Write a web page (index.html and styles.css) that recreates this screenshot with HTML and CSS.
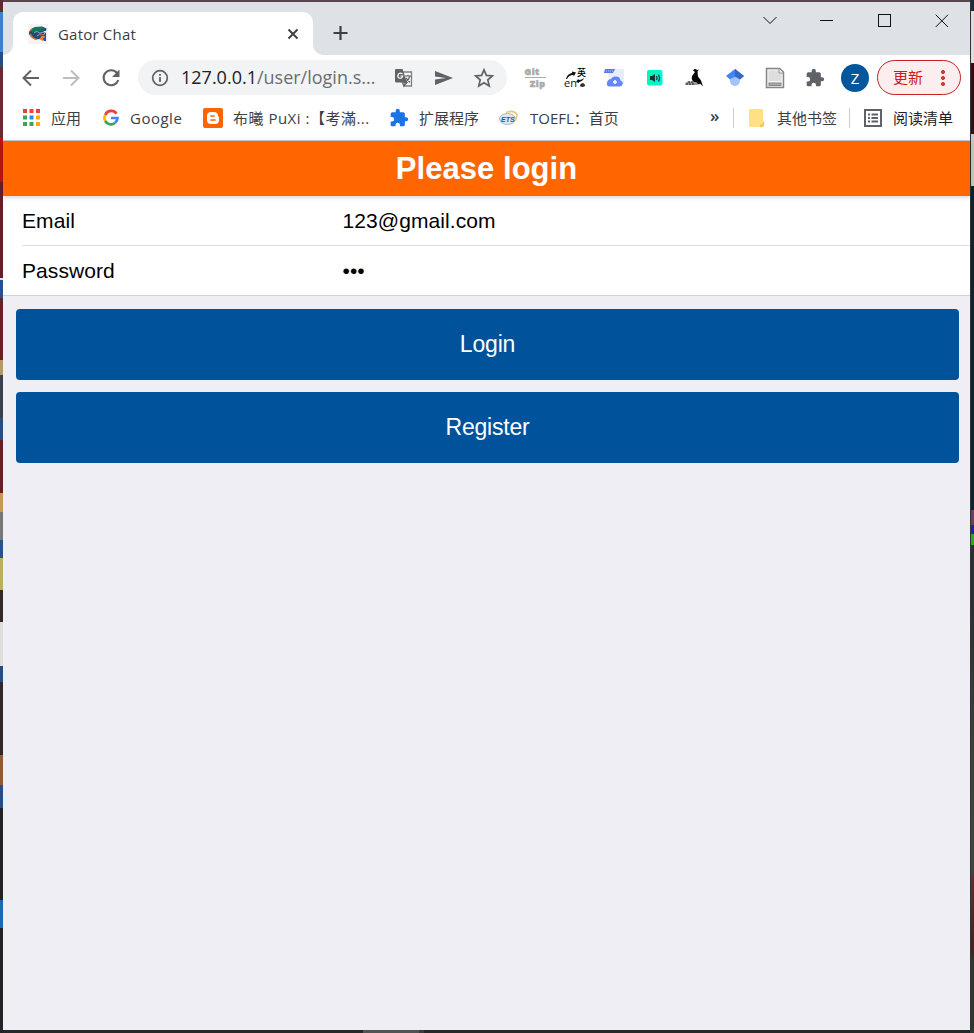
FILE: index.html
```html
<!DOCTYPE html>
<html lang="en">
<head>
<meta charset="utf-8">
<title>Gator Chat</title>
<link rel="stylesheet" href="styles.css">
</head>
<body>
<div class="edge edge-left"></div>
<div class="window">
  <div class="tabstrip">
    <div class="tab">
      <svg class="favicon" width="20" height="20" viewBox="0 0 20 20"><rect width="20" height="20" fill="#f5f4f4"/><path d="M1 8l2-3 4-2 7-.5 4.500 2L18 7l-3 0 3 2v4l-4-1-2 3-5 .5L3 13 1 10z" fill="#1d4f70"/><path d="M4 5l4-2 6 0 3 2-3 2H7L4 9z" fill="#12775a"/><path d="M2 7l2-2M2 10l3 4 4 1.500" stroke="#ed682b" stroke-width="1.300" fill="none"/><path d="M6 8.500l3-1 3 1.500 5-1-1 3-4-1-3 2" stroke="#b6cbd9" stroke-width=".7" fill="none"/><path d="M11 10.500l5-.500-3 2z" fill="#c34242"/><path d="M11 15l4-3 2 1-2 4z" fill="#f57a22"/><path d="M15 15l3-3v5l-2 0" fill="#1c4f9c"/></svg>
      <span class="tab-title">Gator Chat</span>
      <svg width="12" height="12" viewBox="0 0 12 12"><path d="M1.500 1.500l9 9m0-9l-9 9" stroke="#3c4043" stroke-width="1.900"/></svg>
    </div>
    <svg class="new-tab" width="16" height="16" viewBox="0 0 16 16"><path d="M7.500 1v14M.5 8h14" stroke="#3c4043" stroke-width="2.200"/></svg>
    <div class="window-controls">
      <svg width="14" height="14" viewBox="0 0 14 14"><path d="M.5 4L7 10.500 13.500 4"/></svg>
      <svg width="14" height="14" viewBox="0 0 14 14"><path d="M0 7.500h13"/></svg>
      <svg width="14" height="14" viewBox="0 0 14 14"><rect x=".5" y="1.500" width="12" height="12"/></svg>
      <svg width="14" height="14" viewBox="0 0 14 14"><path d="M.7 1.700l12.300 12.300m0-12.300L.7 14"/></svg>
    </div>
  </div>

  <div class="toolbar">
    <span class="cell"><svg width="18" height="18" viewBox="0 0 18 18"><path d="M17 9H2m7-7.500L1.500 9 9 16.500" fill="none" stroke="#5f6368" stroke-width="2"/></svg></span>
    <span class="cell"><svg width="18" height="18" viewBox="0 0 18 18"><path d="M1 9h15M9 1.500L16.500 9 9 16.500" fill="none" stroke="#bbbdbf" stroke-width="2"/></svg></span>
    <span class="cell"><svg width="18" height="18" viewBox="0 0 18 18"><path d="M15 4A7.500 7.500 0 1 0 16.300 11" fill="none" stroke="#5f6368" stroke-width="2.100"/><path d="M17.500.5v7.500H10z" fill="#5f6368"/></svg></span>
    <div class="omnibox">
      <svg width="18" height="18" viewBox="0 0 18 18"><circle cx="9" cy="9" r="7.300" fill="none" stroke="#5f6368" stroke-width="1.700"/><path d="M9 8v5M9 5v1.800" stroke="#5f6368" stroke-width="1.800"/></svg>
      <span class="url">127.0.0.1<span class="path">/user/login.s...</span></span>
      <span class="cell"><svg width="20" height="20" viewBox="0 0 20 20"><path d="M6 4h11.500v14H10L8 14" fill="#f7f8f9" stroke="#7c8084" stroke-width="1.300"/><path d="M1.500 1h7l4.500 13.500H2.500Q1 14.500 1 13V2z" fill="#5f6368"/><path d="M8.500 6Q6.500 4.300 4.700 5.800 3 8 4.700 9.800 7.500 11.300 8.700 8H6.500" fill="none" stroke="#fff" stroke-width="1.200"/><path d="M11 8h6M14 6.700V8m2 0q-1 4-4.500 6M12 10l4 4.500M10 14.500h3L10 18z" fill="none" stroke="#5f6368" stroke-width="1.200"/></svg></span>
      <span class="cell"><svg width="18" height="16" viewBox="0 0 18 16"><path d="M0 1l18 7L0 15V9.500L11 8 0 6.500z" fill="#5f6368"/></svg></span>
      <span class="cell"><svg width="20" height="20" viewBox="0 0 20 20"><path d="M10 1.800l2.400 5.600 6 .5-4.600 4 1.400 6L10 14.700l-5.200 3.200 1.400-6-4.600-4 6-.5z" fill="none" stroke="#5f6368" stroke-width="1.700"/></svg></span>
    </div>
    <div class="extensions">
      <span class="cell"><span class="gitzip"><span>Git</span><i></i><span class="zip">Zip</span></span></span>
      <span class="cell"><svg width="22" height="22" viewBox="0 0 22 22"><path d="M2 12Q3 7 8 6V4.500l4 1-2 3.500-1-1Q5 8 3 12zM20 11q-1 3-5 4v1l-3-1 2-3 1 1q3 0 5-2z" fill="#111"/><text class="ext-cjk" x="13" y="8.500">英</text><text class="ext-en" x="0" y="20">en</text><path d="M16 18q3-4 5 0v1q-3 2-5 0z" fill="#333"/></svg></span>
      <span class="cell"><svg width="22" height="22" viewBox="0 0 22 22"><path d="M4 2h16v15H5z" fill="#e7edf7"/><path d="M1 2h10L9 6H0z" fill="#5978e7"/><path d="M2 4h7" stroke="#b9c8ff" stroke-dasharray="1 1"/><path d="M6 19.500q-4 0-3-4Q4 12 7 12 8 9 12 9.500q4 0 4.500 4 3 1 2 4-.5 2-3 2z" fill="#6685f6"/><path d="M11 13v4m-2-2h4" stroke="#fff" stroke-width="1.500" fill="none"/></svg></span>
      <span class="cell"><svg width="16" height="16" viewBox="0 0 16 16"><defs><linearGradient id="mint" x2="1"><stop stop-color="#00f8b3"/><stop offset="1" stop-color="#00f4df"/></linearGradient></defs><rect width="15.500" height="15.500" rx="2" fill="url(#mint)"/><path d="M3 6h2l3-2v8L5 10H3z" fill="#13372e"/><path d="M9.500 6q1 2 0 4m2-5.500q2 3.500 0 7" fill="none" stroke="#13372e" stroke-width="1.200"/></svg></span>
      <span class="cell"><svg width="20" height="20" viewBox="0 0 20 20"><path d="M8 2.500Q10 0 12 2l2-.5-1.500 2 .5 5 3 4 2 6-3-3-1 1-6-3Q6 11 7 8l3-4z" fill="#080808"/><path d="M1 14.500q2-2 6-1l5 1 1 2.500H0q0-2 1-2.500" fill="#999"/><path d="M1 16h9m-7-2h6" stroke="#222" stroke-dasharray="2 1"/></svg></span>
      <span class="cell"><svg width="18" height="20" viewBox="0 0 18 20"><circle cx="9" cy="13" r="5" fill="#a3c3fa"/><path d="M9 1l9 7-4 3.500Q9 6.500 4 11.500L0 8z" fill="#4285f4"/><path d="M9 1l9 7-4 3.500L9 8z" fill="#3567c7"/></svg></span>
      <span class="cell"><svg width="20" height="22" viewBox="0 0 20 22"><path d="M1.500 1.500h13L18.500 5v15.500h-17z" fill="#f3f3f3" stroke="#858585" stroke-width="1.500"/><path d="M3.500 3.500h10l3 3V14h-13z" fill="#dedede"/><path d="M14 2v4h4" fill="#eee" stroke="#999"/><rect x="4" y="16" width="12" height="2.500" fill="#aaa" stroke="#888"/></svg></span>
      <span class="cell"><svg width="20" height="20" viewBox="0 0 24 24"><path d="M20.500 11H19V7a2 2 0 0 0-2-2h-4V3.500a2.500 2.500 0 0 0-5 0V5H4a2 2 0 0 0-2 2v3.800h1.500a2.700 2.700 0 0 1 0 5.400H2V20a2 2 0 0 0 2 2h3.800v-1.500a2.700 2.700 0 0 1 5.400 0V22H17a2 2 0 0 0 2-2v-4h1.500a2.500 2.500 0 0 0 0-5z" fill="#5f6368"/></svg></span>
      <span class="cell"><span class="avatar">Z</span></span>
    </div>
    <div class="update"><span>更新</span><i class="dots"></i></div>
  </div>

  <div class="bookmarks">
    <a class="bookmark apps"><svg width="18" height="18" viewBox="0 0 18 18"><path d="M0 0h4v4H0zM6.500 0h4v4h-4zM13 0h4v4h-4z" fill="#ea4335"/><path d="M0 6.500h4v4H0zM0 13h4v4H0zM6.500 13h4v4h-4z" fill="#34a853"/><path d="M6.500 6.500h4v4h-4z" fill="#2789ee"/><path d="M13 6.500h4v4h-4zM13 13h4v4h-4z" fill="#fbac05"/></svg><span>应用</span></a>
    <a class="bookmark google"><svg width="16" height="16" viewBox="0 0 16 16"><path d="M13.500 3.600A6.500 6.500 0 0 0 2.200 5" stroke="#ea4335" stroke-width="2.700" fill="none"/><path d="M2.200 5a6.500 6.500 0 0 0 0 6" stroke="#fbbc05" stroke-width="2.700" fill="none"/><path d="M2.200 11A6.500 6.500 0 0 0 12 13" stroke="#34a853" stroke-width="2.700" fill="none"/><path d="M12 13a6.500 6.500 0 0 0 2.500-5H8" stroke="#4285f4" stroke-width="2.700" fill="none"/></svg><span>Google</span></a>
    <a class="bookmark blogger"><svg width="20" height="20" viewBox="0 0 20 20"><rect width="20" height="20" rx="2" fill="#fb6502"/><path d="M8 4h3q4 0 4 4 0 1 1 1v3q0 4-4 4H8q-4 0-4-4V8q0-4 4-4z" fill="#fff"/><path d="M8 8h3M8 12h4" stroke="#fb6502" stroke-width="1.700" stroke-linecap="round"/></svg><span>布曦 PuXi :【考滿...</span></a>
    <a class="bookmark ext"><svg width="20" height="20" viewBox="0 0 24 24"><path d="M20.500 11H19V7a2 2 0 0 0-2-2h-4V3.500a2.500 2.500 0 0 0-5 0V5H4a2 2 0 0 0-2 2v3.800h1.500a2.700 2.700 0 0 1 0 5.400H2V20a2 2 0 0 0 2 2h3.800v-1.500a2.700 2.700 0 0 1 5.400 0V22H17a2 2 0 0 0 2-2v-4h1.500a2.500 2.500 0 0 0 0-5z" fill="#1a73e8"/></svg><span>扩展程序</span></a>
    <a class="bookmark toefl"><svg width="20" height="16" viewBox="0 0 20 16"><ellipse cx="8.500" cy="9" rx="8" ry="5.500" fill="#dce9f4" stroke="#9dbdd8"/><path d="M7 2.500q8-3 11 2 0 5-4 8" fill="none" stroke="#f1c56c" stroke-width="1.500"/><text class="ets" x="2" y="11.500">ETS</text></svg><span>TOEFL：首页</span></a>
    <span class="more">»</span>
    <a class="bookmark other"><svg width="18" height="18" viewBox="0 0 18 18"><path d="M1 0h12q1 0 1 1v10l1 2v4q-1 1-3 1H1q-1 0-1-1V1q0-1 1-1z" fill="#ffe083"/><path d="M14 12q2 1 1 4t-4 2v-2q0-1 3-1z" fill="#f4c84b"/></svg><span>其他书签</span></a>
    <a class="bookmark reading"><svg width="18" height="18" viewBox="0 0 18 18"><rect x="1" y="1" width="16" height="16" fill="#fff" stroke="#5f6368" stroke-width="2"/><path d="M4 5.500h2m1.500 0H14M4 9h2m1.500 0H14M4 12.500h2m1.500 0H14" stroke="#5f6368" stroke-width="1.800"/></svg><span>阅读清单</span></a>
  </div>

  <main class="page">
    <header class="page-header">Please login</header>
    <form class="fields">
      <div class="row"><label>Email</label><span>123@gmail.com</span></div>
      <div class="row"><label>Password</label><span>•••</span></div>
    </form>
    <div class="actions">
      <button type="button">Login</button>
      <button type="button">Register</button>
    </div>
  </main>
</div>
<div class="edge edge-right"></div>
</body>
</html>
```
FILE: styles.css
```css
* { box-sizing: border-box; }
body { margin: 0; width: 974px; height: 1033px; display: grid; grid-template-columns: 3px 967px 4px; background: linear-gradient(90deg, #252829 363px, #505453 363px 419px, #3a3d3c 419px 424px, #252829 424px); overflow: hidden; font-family: "Open Sans", "Noto Sans CJK SC", sans-serif; color: #3c4043; }
svg { display: block; flex: none; overflow: visible; }
.edge-left { background: linear-gradient(#602a34 0 12px, #427dd0 12px 52px, #284e80 52px 67px, #682b33 67px 138px, #bb1710 138px 182px, #64202a 182px 278px, #d9e1e9 278px 280px, #27528d 280px 298px, #682024 298px 360px, #b69568 360px 375px, #39414c 375px 418px, #294e80 418px 440px, #642024 440px 493px, #c49a59 493px 512px, #777 512px 540px, #27528d 540px 558px, #bcae61 558px 590px, #33292b 590px 622px, #ddd 622px 666px, #284d82 666px 682px, #30282b 682px 755px, #905a37 755px 785px, #284d82 785px 808px, #222326 808px 900px, #1c67b5 900px 928px, #222326 928px); }
.edge-right { border-left: 1px solid #303435; background: linear-gradient(#1a2d36 0 11px, #dededc 11px 63px, #321014 63px 134px, #c6c8c8 134px 186px, #11212c 186px 510px, #713b68 510px 525px, #2420a0 525px 534px, #27aa22 534px 545px, #293034 545px 600px, #39413a 740px, #3f473e 870px, #632d31 880px, #43221f 950px, #303630 960px); }
.window { display: flex; flex-direction: column; height: 1030px; border-top: 2px solid #56454e; background: #fff; }
.tabstrip { height: 53px; background: #dee1e6; display: flex; align-items: flex-start; flex: none; }
.tab { width: 300px; height: 43px; margin: 10px 0 0 10px; background: #fff; border-radius: 10px 10px 0 0; display: flex; align-items: center; padding: 0 14px 0 15px; position: relative; }
.tab::before, .tab::after { content: ""; position: absolute; bottom: 0; width: 10px; height: 10px; }
.tab::before { left: -10px; background: radial-gradient(circle at 0 0, transparent 9.500px, #fff 10px); }
.tab::after { right: -10px; background: radial-gradient(circle at 100% 0, transparent 9.500px, #fff 10px); }
.tab-title { margin-left: 10px; font-size: 15px; letter-spacing: .2px; flex: 1; }
.new-tab { margin: 23px 0 0 20px; }
.window-controls { margin: 11px 21px 0 auto; display: flex; gap: 43px; }
.window-controls svg { fill: none; stroke: #111; stroke-width: 1; }
.window-controls svg:nth-child(3) { margin-left: 1px; }
.toolbar { height: 45px; flex: none; display: flex; align-items: center; padding: 0 9px 0 8px; }
.cell { width: 40px; height: 34px; display: flex; align-items: center; justify-content: center; flex: none; }
.omnibox { margin-left: 7px; width: 369px; height: 35px; border-radius: 18px; background: #f1f3f4; display: flex; align-items: center; padding: 0 3px 0 13px; flex: none; }
.url { flex: 1; margin: -2px 0 0 12px; white-space: nowrap; font-size: 18px; color: #202124; }
.path { color: #6a6e73; }
.extensions { display: flex; margin-left: 8px; }
.gitzip { display: grid; grid-template-rows: 10px 2px 10px; width: 21px; font: 800 9px/10px "Open Sans", sans-serif; letter-spacing: .5px; color: #aaa; -webkit-text-stroke: .5px #aaa; }
.gitzip i { background: #aaa; height: 1px; }
.zip { justify-self: end; }
.ext-cjk { font: 500 9px "Noto Sans CJK SC", sans-serif; }
.ext-en { font: 11px "Open Sans", sans-serif; fill: #111; }
.avatar { width: 28px; height: 28px; border-radius: 50%; background: #01579b; color: #fff; font-size: 15px; line-height: 28px; text-align: center; }
.update { margin-left: 2px; width: 84px; height: 35px; flex: none; border: 1.500px solid #c5221f; border-radius: 18px; background: #fceeee; color: #c5221f; font-size: 15px; display: flex; align-items: center; padding: 0 15px; justify-content: space-between; }
.update span { margin-top: -2px; }
.dots { width: 4px; height: 18px; background: radial-gradient(circle, #d33b2f 1.900px, transparent 2.200px) 0 0 / 4px 6px; }
.bookmarks { height: 41px; flex: none; border-bottom: 1px solid #d0d3d7; display: flex; align-items: center; padding: 0 0 5px 20px; font-size: 15px; }
.bookmark { display: flex; align-items: center; white-space: nowrap; flex: none; }
.bookmark span { line-height: 24px; }
.apps { width: 80px; gap: 10px; }
.google { width: 100px; gap: 11px; }
.google span { letter-spacing: .5px; }
.blogger { width: 186px; gap: 10px; }
.blogger span { letter-spacing: .5px; }
.ext { width: 110px; gap: 10px; }
.toefl { width: 180px; gap: 11px; }
.ets { font: italic bold 7px "Liberation Sans", sans-serif; fill: #205a96; }
.more { font-size: 17px; font-weight: 600; line-height: 20px; margin: -4px 0 0 31px; width: 23px; }
.other { border-left: 1px solid #ccc; width: 116px; height: 20px; padding-left: 15px; gap: 10px; }
.reading { border-left: 1px solid #ccc; height: 20px; padding-left: 14px; gap: 11px; color: #202124; }
.page { flex: 1; background: #efeef4; font-family: "Liberation Sans", Arial, sans-serif; color: #000; }
.page-header { height: 55px; background: #ff6600; color: #fff; text-align: center; font-size: 31px; letter-spacing: .05px; line-height: 55px; font-weight: bold; position: relative; box-shadow: 0 1px 5px rgba(0,0,0,.2); }
.fields { margin: 0; background: #fff; border-bottom: 1px solid #d3d3d7; }
.row { height: 50px; margin-left: 19px; display: grid; grid-template-columns: 320.500px 1fr; align-items: center; font-size: 21px; letter-spacing: .08px; border-bottom: 1px solid #dfdfe2; }
.row:last-child { height: 49px; border-bottom: 0; }
.actions { padding: 13px 11px 0 13px; display: grid; gap: 12px; }
.actions button { height: 71px; border: 0; border-radius: 4px; background: #00529b; color: #fff; font: 23px "Liberation Sans", Arial, sans-serif; letter-spacing: -.2px; }
```
